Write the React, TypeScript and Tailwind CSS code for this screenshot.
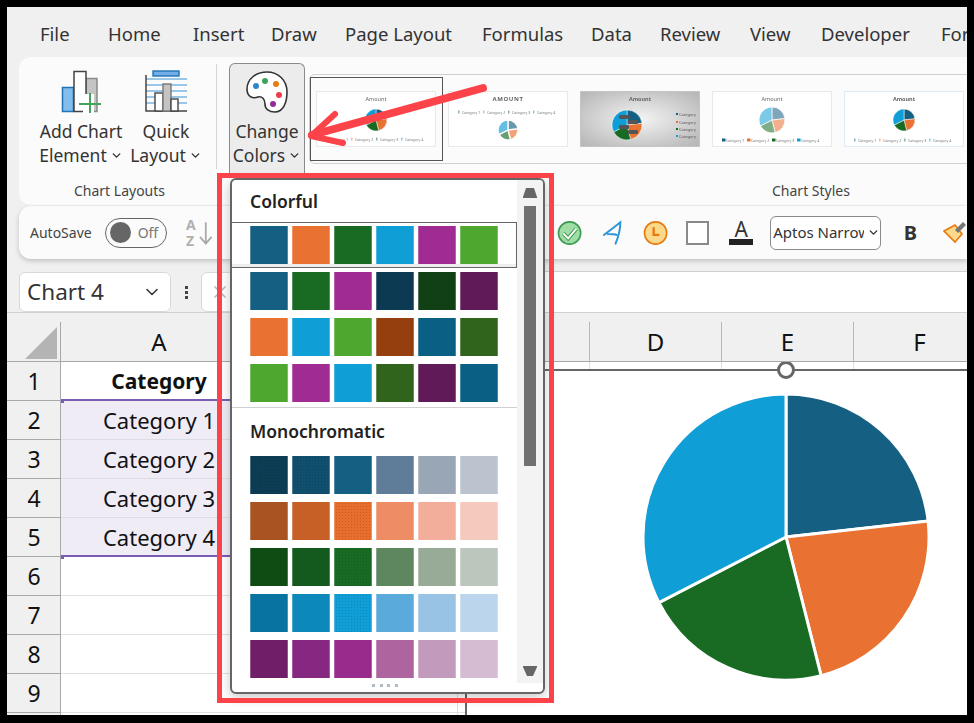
import { ChevronDown, X } from "lucide-react"

const font = "font-['Noto_Sans',sans-serif]"

// tab boxes keep the words at the spacing of the real ribbon
const tabs = [
  { label: "File", box: "w-[68px]" },
  { label: "Home", box: "w-[85px]" },
  { label: "Insert", box: "w-[78px]" },
  { label: "Draw", box: "w-[74px]" },
  { label: "Page Layout", box: "w-[137px]" },
  { label: "Formulas", box: "w-[109px]" },
  { label: "Data", box: "w-[69px]" },
  { label: "Review", box: "w-[90px]" },
  { label: "View", box: "w-[71px]" },
  { label: "Developer", box: "w-[120px]" },
  { label: "Format", box: "w-[60px]" },
]

const colorful = [
  ["#156082", "#E97132", "#196B24", "#0F9ED5", "#A02B93", "#4EA72E"],
  ["#156082", "#196B24", "#A02B93", "#0C3A52", "#114015", "#601A57"],
  ["#E97132", "#0F9ED5", "#4EA72E", "#953E0E", "#0A5F84", "#30641C"],
  ["#4EA72E", "#A02B93", "#0F9ED5", "#30641C", "#601A57", "#0A5F84"],
]

const mono = [
  ["#0D3C55", "#114F6E", "#156082", "#5F7D98", "#98A6B5", "#BAC3CE"],
  ["#A85321", "#C76026", "#E86E2E", "#EE8C65", "#F2AE9B", "#F6C9BE"],
  ["#0E4C14", "#145A1E", "#196B24", "#5E8760", "#98AB96", "#BBC6BC"],
  ["#0873A0", "#0C88BA", "#0F9ED5", "#5BAADC", "#99C3E4", "#BAD5EC"],
  ["#701E68", "#862781", "#982B8C", "#AD649F", "#C29ABC", "#D5BCD2"],
]

// which mono swatches carry the dotted texture
const dotted = new Set(["#0D3C55", "#114F6E", "#E86E2E", "#196B24", "#0F9ED5"])

const pieColors = ["#156082", "#E97132", "#196B24", "#0F9ED5"]
const pieStops = [0, 83.6, 165.8, 242.7, 360]

function slice(cx: number, cy: number, r: number, from: number, to: number) {
  const a = ((from - 90) * Math.PI) / 180
  const b = ((to - 90) * Math.PI) / 180
  const large = to - from > 180 ? 1 : 0
  return `M${cx} ${cy}L${cx + r * Math.cos(a)} ${cy + r * Math.sin(a)}A${r} ${r} 0 ${large} 1 ${cx + r * Math.cos(b)} ${cy + r * Math.sin(b)}Z`
}

function Pie({ cx, cy, r, gap = 0.5, opacity = 1 }: { cx: number; cy: number; r: number; gap?: number; opacity?: number }) {
  return (
    <g>
      {pieColors.map((c, i) => (
        <path key={i} d={slice(cx, cy, r, pieStops[i], pieStops[i + 1])} fill={c} stroke="#fff" strokeWidth={gap} opacity={opacity} />
      ))}
    </g>
  )
}

function Legend({ y, chips }: { y: number; chips?: boolean }) {
  return (
    <g>
      {[14, 39, 64, 89].map((x, i) => (
        <g key={x}>
          <rect x={x - 4} y={y - 1.5} width={chips ? 3.5 : 1.5} height={3} fill={pieColors[i]} opacity={chips ? 1 : 0.5} />
          <text x={x} y={y + 1.5} fontSize="3.6" fill="#777">Category {i + 1}</text>
        </g>
      ))}
    </g>
  )
}

function Thumb({ kind }: { kind: number }) {
  const title = kind === 1 ? "AMOUNT" : "Amount"
  const bold = kind === 1 || kind === 2 || kind === 4
  return (
    <svg viewBox="0 0 120 56" className="w-[120px] h-[56px] shrink-0 blur-[0.6px]">
      <defs>
        <radialGradient id="thumbGray" cx="50%" cy="50%" r="70%">
          <stop offset="0%" stopColor="#f4f4f4" />
          <stop offset="100%" stopColor="#b4b4b4" />
        </radialGradient>
      </defs>
      <rect x="0.5" y="0.5" width="119" height="55" fill={kind === 2 ? "url(#thumbGray)" : "#fff"} stroke={kind === 4 ? "#dfeaf6" : kind === 2 ? "#c4c4c4" : "#eaeaea"} strokeWidth="1.2" />
      <text x="60" y="10" textAnchor="middle" fontSize={kind === 1 ? 6 : 5.5} fontWeight={bold ? 700 : 400} fill="#666" letterSpacing={kind === 1 ? 0.6 : 0}>{title}</text>
      {kind === 0 && <><Pie cx={60} cy={29} r={11} /><Legend y={48} /></>}
      {kind === 1 && <><Legend y={21} /><Pie cx={60} cy={39} r={10} gap={1.4} opacity={0.65} /></>}
      {kind === 2 && (
        <>
          <Pie cx={47} cy={34} r={15} />
          {[0, 1, 2, 3].map((i) => <rect key={i} x={i % 2 ? 48 : 39} y={24 + i * 5} width={10} height={4} rx={1} fill="#555" />)}
          {[23, 31, 38, 45].map((y, i) => (
            <g key={y}>
              <rect x={96} y={y - 1} width={2} height={2} fill={pieColors[i]} />
              <text x={99} y={y + 1.5} fontSize="4" fill="#555">Category</text>
            </g>
          ))}
        </>
      )}
      {kind === 3 && <><Pie cx={60} cy={29} r={13} gap={0.8} opacity={0.55} /><Legend y={49} chips /></>}
      {kind === 4 && <><Pie cx={60} cy={29} r={11} /><Legend y={49} /></>}
    </svg>
  )
}

function Swatch({ color, texture }: { color: string; texture?: boolean }) {
  return (
    <div
      className={`w-[38px] h-[38px] border-x border-white/25 ${texture ? "bg-[radial-gradient(#00000024_1px,transparent_1px)] bg-[length:3px_3px]" : ""}`}
      style={{ backgroundColor: color }}
    />
  )
}

function SwatchRow({ colors, texture }: { colors: string[]; texture?: boolean }) {
  return (
    <div className="flex gap-1 pl-[18px]">
      {colors.map((c, i) => <Swatch key={i} color={c} texture={texture && dotted.has(c)} />)}
    </div>
  )
}

function ChartIcon() {
  return (
    <svg viewBox="0 0 40 44" className="w-10 h-11">
      <rect x="1.5" y="17.5" width="11" height="24" fill="#83bdec" stroke="#1f73b7" strokeWidth="1.5" />
      <rect x="25" y="8.5" width="11" height="33" fill="#c4c4c4" stroke="#8a8a8a" strokeWidth="1.5" />
      <rect x="13" y="1.5" width="12" height="40" fill="#fff" stroke="#444" strokeWidth="1.5" />
      <rect x="22" y="24" width="11" height="20" fill="#fff" />
      <path d="M21 35h23M32 24v20" stroke="#43a35b" strokeWidth="2" fill="none" transform="translate(-3 -1)" />
    </svg>
  )
}

function LayoutIcon() {
  return (
    <svg viewBox="0 0 42 42" className="w-[42px] h-[42px]">
      <rect x="8" y="1" width="26" height="5" fill="#74aee6" stroke="#1f73b7" strokeWidth="1.4" />
      {[9, 15, 21, 27, 33].map((y) => <path key={y} d={`M1 ${y}h41`} stroke="#3b94d3" strokeWidth="1.2" />)}
      <path d="M1 5v36h41" stroke="#444" strokeWidth="1.5" fill="none" />
      <rect x="10" y="23" width="8" height="18" fill="#fff" stroke="#444" strokeWidth="1.4" />
      <rect x="18" y="14" width="8" height="27" fill="#c4c4c4" stroke="#777" strokeWidth="1.4" />
      <rect x="26" y="29" width="7" height="12" fill="#fff" stroke="#444" strokeWidth="1.4" />
    </svg>
  )
}

function PaletteIcon() {
  return (
    <svg viewBox="0 0 44 44" className="w-11 h-11">
      <path d="M22 2C33 2 42 10 42 22C42 33 38 42 30 42C24 42 20 39 20 34C20 29 17 26 13 27C8 29 2 27 2 19C2 9 11 2 22 2Z" fill="#fff" stroke="#333" strokeWidth="1.6" />
      <circle cx="11" cy="16" r="3" fill="#2f86cf" />
      <circle cx="20" cy="11" r="3" fill="#3fa45b" />
      <circle cx="31" cy="14" r="3" fill="#e77a10" />
      <circle cx="34" cy="25" r="3" fill="#ef3d48" />
      <circle cx="28" cy="34" r="3" fill="#962a9c" />
    </svg>
  )
}

function RibbonLabel({ lines, chevron }: { lines: string[]; chevron?: boolean }) {
  return (
    <div className="text-center text-[17.5px] leading-[24px] text-[#333] whitespace-nowrap">
      <div>{lines[0]}</div>
      <div className="flex items-center justify-center gap-[3px]">
        {lines[1]}
        {chevron && <ChevronDown size={13} strokeWidth={2.6} />}
      </div>
    </div>
  )
}

export default function App() {
  return (
    <div className={`relative w-[974px] h-[723px] overflow-hidden bg-black pt-[7px] pl-[7px] pr-[7px] pb-[8px] ${font}`}>
      <div className="h-full flex flex-col bg-[#f0f0f0] overflow-hidden">
        {/* tabs */}
        <div className="h-[50px] shrink-0 flex items-center pl-[33px] pt-[4px] text-[18.5px] text-[#333] whitespace-nowrap">
          {tabs.map((t) => <span key={t.label} className={`${t.box} shrink-0`}>{t.label}</span>)}
        </div>

        {/* ribbon */}
        <div className="h-[148px] shrink-0 ml-3 flex bg-[#fbfbfb] rounded-l-[12px]">
          <div className="w-[198px] shrink-0 flex flex-col">
            <div className="flex-1 flex border-r border-[#d6d6d6] mt-[7px] mb-[10px]">
              <div className="w-[111px] flex flex-col items-center pt-[6px] pl-[13px] gap-[5px]">
                <ChartIcon />
                <RibbonLabel lines={["Add Chart", "Element"]} chevron />
              </div>
              <div className="w-[76px] flex flex-col items-center pt-[6px] pr-[4px] gap-[7px]">
                <LayoutIcon />
                <RibbonLabel lines={["Quick", "Layout"]} chevron />
              </div>
            </div>
            <div className="h-[26px] pl-[3px] pt-[1px] text-center text-[14px] text-[#444]">Chart Layouts</div>
          </div>
          <div className="flex-1 flex flex-col min-w-0">
            <div className="flex pl-[12px] h-[118px]">
              <div className="w-[76px] shrink-0 mt-[6px] flex flex-col items-center pt-[6px] gap-[5px] bg-[#ececec] border border-b-0 border-[#8a8a8a] rounded-t-[6px]">
                <PaletteIcon />
                <RibbonLabel lines={["Change", "Colors"]} chevron />
              </div>
              <div className="relative flex-1 mt-[17px] mb-[11px] ml-[4px] -mr-2 flex items-center gap-3 pl-[6px] border border-[#d0d0d0] rounded-l-[6px]">
                <div className="absolute left-[0px] top-[2px] w-[133px] h-[84px] border border-[#555]" />
                {[0, 1, 2, 3, 4].map((k) => <Thumb key={k} kind={k} />)}
              </div>
            </div>
            <div className="pl-[555px] pt-[5px] text-[14px] text-[#444]">Chart Styles</div>
          </div>
        </div>

        {/* quick access toolbar */}
        <div className="h-[53px] shrink-0 mt-[1px] ml-3 flex items-center bg-[#fbfbfb] rounded-l-[12px] shadow-[0_2px_5px_#00000033] whitespace-nowrap">
          <span className="ml-[11px] text-[14px] text-[#444]">AutoSave</span>
          <div className="ml-[13px] w-[64px] h-[30px] flex items-center border border-[#666] rounded-full px-1">
            <div className="w-[21px] h-[21px] rounded-full bg-[#666]" />
            <span className="ml-[7px] text-[14px] text-[#777]">Off</span>
          </div>
          <div className="ml-[19px] w-[10px] flex flex-col text-[14px] leading-[16px] font-bold text-[#b0b0b0]">
            <span>A</span>
            <span>Z</span>
          </div>
          <svg viewBox="0 0 14 26" className="ml-[3px] w-[14px] h-[26px]">
            <path d="M7 2v22M1 17l6 7 6-7" fill="none" stroke="#a8a8a8" strokeWidth="1.8" />
          </svg>
          <svg viewBox="0 0 26 26" className="ml-[345px] w-[26px] h-[26px]">
            <circle cx="13" cy="13" r="11.5" fill="#9fdca6" stroke="#3c9a50" strokeWidth="1.6" />
            <path d="M6.5 13.5l5 5 8.5-10" fill="none" stroke="#3c9a50" strokeWidth="4" />
            <path d="M6.5 13.5l5 5 8.5-10" fill="none" stroke="#fff" strokeWidth="2" />
          </svg>
          <svg viewBox="0 0 24 26" className="ml-[19px] w-6 h-[26px]">
            <path d="M3 15C10 10 15 6 20 2C20 10 18 17 15 24M7 14c4 0 7 0 9 1" fill="none" stroke="#2e95d8" strokeWidth="2" strokeLinecap="round" />
          </svg>
          <svg viewBox="0 0 26 26" className="ml-[18px] w-[26px] h-[26px]">
            <circle cx="13" cy="13" r="11.5" fill="#fbd98b" stroke="#e8790e" strokeWidth="1.6" />
            <path d="M11 7v8h6" fill="none" stroke="#e8790e" strokeWidth="2.4" />
          </svg>
          <div className="ml-[18px] w-6 h-6 bg-white border-2 border-[#8a8a8a]" />
          <div className="ml-[20px] w-6 flex flex-col items-center">
            <span className="text-[21px] leading-[19px] text-[#333]">A</span>
            <div className="w-6 h-[6px] bg-[#222]" />
          </div>
          <div className="ml-[17px] w-[114px] h-[34px] flex items-center pl-[2px] bg-white border border-[#8a8a8a] rounded-[6px] text-[15px] text-[#333]">
            <span className="w-[91px] overflow-hidden">Aptos Narrow</span>
            <ChevronDown size={13} strokeWidth={2.6} className="ml-auto" />
          </div>
          <span className="ml-[23px] text-[20px] font-bold text-[#333]">B</span>
          <svg viewBox="0 0 24 24" className="ml-[26px] w-6 h-6 shrink-0">
            <path d="M1 10l11-6 7 9-7 8z" fill="#fbd98b" stroke="#e8790e" strokeWidth="1.6" />
            <path d="M12 9l8-8 3 3-8 8z" fill="#777" />
          </svg>
        </div>

        {/* name box + formula bar */}
        <div className="h-[53px] shrink-0 flex items-end">
          <div className="h-[40px] ml-3 w-[152px] shrink-0 flex items-center justify-between pl-[7px] pr-[8px] bg-white border border-[#d8d8d8] rounded-[6px] text-[22.5px] text-[#333]">
            Chart 4
            <ChevronDown size={20} strokeWidth={1.8} />
          </div>
          <div className="w-[30px] h-[40px] flex flex-col items-center justify-center gap-[2px]">
            {[0, 1, 2].map((i) => <div key={i} className="w-[3px] h-[3px] bg-[#444]" />)}
          </div>
          <div className="w-[40px] h-[40px] flex items-center pl-2 bg-white border border-[#d8d8d8] rounded-l-[6px]">
            <X size={20} className="text-[#b8b8b8]" />
          </div>
          <div className="flex-1 h-[41px] bg-white border-t border-[#d0d0d0]" />
        </div>

        {/* column headers */}
        <div className="h-[50px] shrink-0 grid grid-cols-[54px_197px_200px_132px_132px_132px_132px] border-t border-[#d0d0d0] border-b border-b-[#a8a8a8] text-[24px] text-[#111]">
          <div className="flex items-end justify-end pr-[3px] pb-[2px] border-r border-[#a8a8a8] mt-[9px]">
            <div className="w-[32px] h-[32px] bg-[#b4b4b4] [clip-path:polygon(100%_0,100%_100%,0_100%)]" />
          </div>
          {["A", "B", "C", "D", "E", "F"].map((c) => (
            <div key={c} className="mt-[9px] flex items-center justify-center border-r border-[#b8b8b8]">{c}</div>
          ))}
        </div>

        {/* cells */}
        <div className="relative flex-1 overflow-hidden bg-white">
          {[1, 2, 3, 4, 5, 6, 7, 8, 9, 10].map((n) => (
            <div key={n} className="h-[39px] grid grid-cols-[54px_197px_200px_132px_132px_132px_132px] text-[22px] leading-none text-[#111]">
              <div className="flex items-center justify-center pl-[1px] bg-[#f0f0f0] border-r border-b border-[#a8a8a8] text-[23px]">{n < 10 ? n : ""}</div>
              <div className={`flex items-center justify-center pr-[1px] border-b ${n === 1 ? "font-bold text-[21px] pt-[2px] border-b-2 border-[#7b5cb3]" : n >= 2 && n <= 4 ? "bg-[#efecf6] border-[#dcdce4]" : n === 5 ? "bg-[#efecf6] border-b-2 border-[#7b5cb3]" : "border-[#e0e0e0]"}`}>
                {n === 1 ? "Category" : n <= 5 ? `Category ${n - 1}` : ""}
              </div>
              {[0, 1, 2, 3, 4].map((c) => <div key={c} className="border-r border-b border-[#e0e0e0]" />)}
            </div>
          ))}
          <div className="absolute left-[54px] top-[37px] w-[3px] h-[4px] bg-[#7b5cb3]" />
          <div className="absolute left-[54px] top-[193px] w-[3px] h-[4px] bg-[#7b5cb3]" />

          {/* chart over the sheet */}
          <div className="absolute left-[458px] top-[7px] right-0 bottom-0 bg-white border-l-2 border-t-2 border-[#666]">
            <div className="absolute left-[310px] -top-[10px] w-[18px] h-[18px] rounded-full bg-white border-[3px] border-[#666]" />
            <svg viewBox="0 0 290 290" className="w-[290px] h-[290px] ml-[174px] mt-[21px]">
              <Pie cx={145} cy={145} r={143} gap={3} />
            </svg>
          </div>
        </div>
      </div>

      {/* colour dropdown */}
      <div className="absolute left-[230px] top-[178px] w-[315px] h-[516px] flex bg-white border-2 border-[#666] rounded-[6px] shadow-[0_4px_12px_#00000033] overflow-hidden">
        <div className="w-[285px] shrink-0 flex flex-col">
          <div className="h-[42px] shrink-0 flex items-center pl-[18px] text-[17.5px] font-semibold text-[#222]">Colorful</div>
          <div className="h-[46px] shrink-0 py-[3px] border border-[#666] -ml-[1px] bg-white shadow-[inset_0_-3px_0_#eeeeee]">
            <SwatchRow colors={colorful[0]} />
          </div>
          <div className="mt-1 flex flex-col gap-2">
            {colorful.slice(1).map((r, i) => <SwatchRow key={i} colors={r} />)}
          </div>
          <div className="mt-[5px] h-px shrink-0 bg-[#d0d0d0]" />
          <div className="h-[46px] shrink-0 flex items-center pl-[18px] text-[17.5px] font-semibold text-[#222]">Monochromatic</div>
          <div className="mt-[2px] flex flex-col gap-2">
            {mono.map((r, i) => <SwatchRow key={i} colors={r} texture />)}
          </div>
          <div className="mt-[6px] pl-[140px] flex gap-[4.5px]">
            {[0, 1, 2, 3].map((i) => <div key={i} className="w-[3px] h-[3px] bg-[#b0bcc6]" />)}
          </div>
        </div>
        <div className="flex-1 h-[503px] flex flex-col items-center bg-[#f3f3f3] pt-[8px]">
          <svg viewBox="0 0 14 10" className="w-[14px] h-[10px]"><path d="M3 0h8l3 9v1H0V9z" fill="#666" /></svg>
          <div className="mt-[8px] w-3 h-[260px] bg-[#707070]" />
          <svg viewBox="0 0 14 10" className="mt-auto mb-[7px] w-[14px] h-[10px]"><path d="M0 0h14v1l-4 9H4L0 1z" fill="#666" /></svg>
        </div>
      </div>

      {/* red annotations */}
      <div className="absolute left-[217px] top-[173px] w-[337px] h-[530px] border-[5px] border-[#fc4349] pointer-events-none" />
      <svg viewBox="0 0 974 723" className="absolute left-0 top-0 w-[974px] h-[723px] pointer-events-none">
        <path d="M483 88L312 135" stroke="#fc4349" strokeWidth="8" strokeLinecap="round" fill="none" />
        <path d="M335 114L311 136L343 143" stroke="#fc4349" strokeWidth="6" strokeLinecap="round" strokeLinejoin="round" fill="none" />
      </svg>
    </div>
  )
}
